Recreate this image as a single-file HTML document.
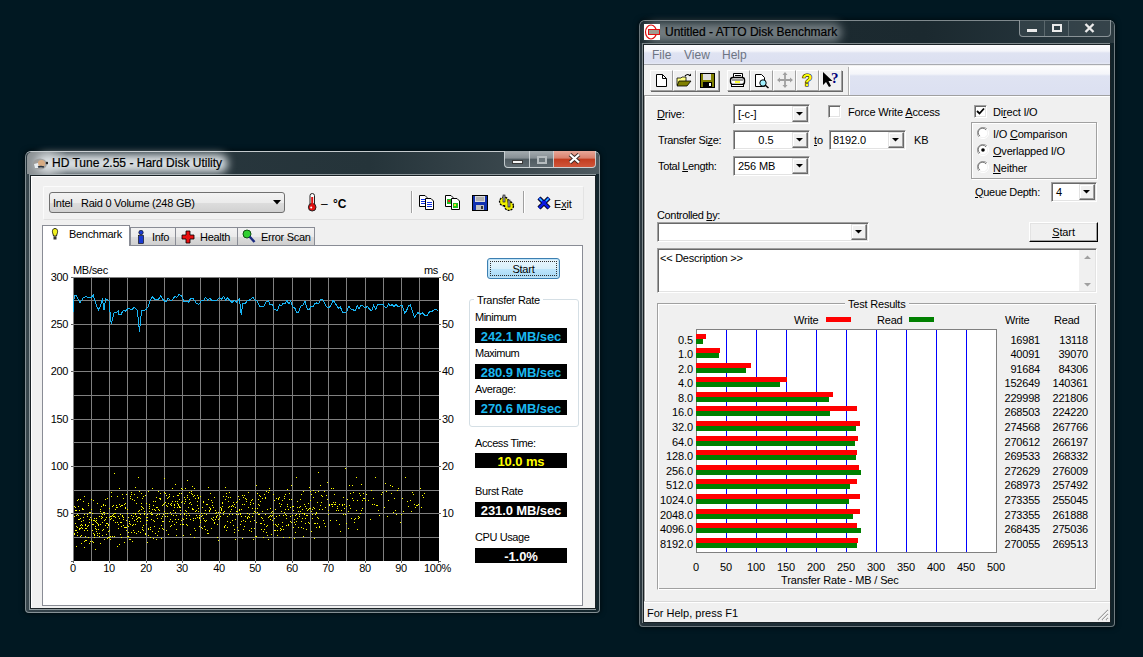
<!DOCTYPE html><html><head><meta charset="utf-8"><style>
*{box-sizing:border-box}
body{margin:0;width:1143px;height:657px;background:#011822;position:relative;overflow:hidden;font-family:"Liberation Sans",sans-serif;color:#000}
.t{position:absolute;white-space:pre}
.r{position:absolute}
svg{position:absolute}
</style></head><body>
<div class="r" style="left:25px;top:151px;width:575px;height:462px;box-shadow:0 0 5px 1px rgba(0,0,0,0.55);border-radius:6px 6px 4px 4px;background:linear-gradient(90deg,#3c494f 0px,#34424a 4px,#22323a 50%,#13252c 100%);border:1px solid rgba(150,160,165,0.85);border-top-color:#c4cacd"></div>
<div class="r" style="left:26px;top:152px;width:573px;height:22px;border-radius:5px 5px 0 0;background:linear-gradient(90deg,#2a383f 0%,#25343a 60%,#3a474d 85%,#4e5a60 100%)"></div>
<div class="r" style="left:29px;top:174px;width:567px;height:436px;border:1px solid #8e989c;border-right:none"></div>
<div class="r" style="left:27px;top:152px;width:40px;height:22px;background:linear-gradient(90deg,#8c9295 0%,#8c9295 55%,rgba(140,146,149,0) 100%);border-radius:5px 0 0 0"></div>
<div class="r" style="left:36px;top:154px;width:192px;height:19px;background:rgba(222,227,230,0.97);border-radius:9px;filter:blur(4px)"></div>
<div class="t" style="left:52.00px;top:156.84px;font-size:12px;line-height:12px;-webkit-text-stroke:0.2px #000;">HD Tune 2.55 - Hard Disk Utility</div>
<svg style="left:31px;top:155px" width="17" height="17" viewBox="0 0 17 17"><ellipse cx="9" cy="9" rx="7" ry="5.5" fill="#9a9896" opacity="0.8"/><circle cx="10.5" cy="8.5" r="3.6" fill="#d7ab82"/><path d="M3 9 L7 8 L8 13 L4 13Z" fill="#e8eef2"/><path d="M7 12 Q10 11 13 12" stroke="#2a3440" stroke-width="1.5" fill="none"/><circle cx="16" cy="8" r="1.3" fill="#222"/></svg>
<div class="r" style="left:504px;top:151px;width:26px;height:17px;border:1px solid rgba(205,212,215,0.9);border-top:none;border-radius:0 0 0 4px;background:linear-gradient(180deg,#a3abaf 0%,#868f94 45%,#4f5b61 50%,#5f6a70 100%)"></div>
<div class="r" style="left:529px;top:151px;width:25px;height:17px;border:1px solid rgba(205,212,215,0.9);border-top:none;background:linear-gradient(180deg,#a3abaf 0%,#868f94 45%,#4f5b61 50%,#5f6a70 100%)"></div>
<div class="r" style="left:553px;top:151px;width:43px;height:17px;border:1px solid rgba(205,212,215,0.9);border-top:none;border-radius:0 0 4px 0;background:linear-gradient(180deg,#e8a798 0%,#d9806c 45%,#c23c1f 50%,#d0553a 100%)"></div>
<div class="r" style="left:512px;top:160px;width:11px;height:4px;background:#f4f4f4;border:1px solid #3a3a3a"></div>
<div class="r" style="left:537px;top:156px;width:10px;height:8px;border:2px solid #b5bcbf;background:#6c777c"></div>
<svg style="left:568px;top:153px" width="13" height="11" viewBox="0 0 13 11"><path d="M2 1.5 L11 9.5 M11 1.5 L2 9.5" stroke="#3a2a26" stroke-width="4"/><path d="M2 1.5 L11 9.5 M11 1.5 L2 9.5" stroke="#fff" stroke-width="2.3"/></svg>
<div class="r" style="left:30px;top:175px;width:566px;height:434px;background:#f0f0f0;border:1px solid #1a2226;box-shadow:inset 1px 1px 0 #fff"></div>
<div class="r" style="left:43px;top:186px;width:541px;height:34px;border:1px solid #fbfbfb;border-bottom-color:#e0e0e0;border-right-color:#e3e3e3;background:#f1f1f1;border-radius:2px"></div>
<div class="r" style="left:49px;top:192px;width:236px;height:21px;border:1px solid #707070;border-radius:3px;background:linear-gradient(180deg,#f3f3f3 0%,#ebebeb 50%,#dddddd 51%,#d1d1d1 100%)"></div>
<div class="t" style="left:53.00px;top:197.69px;font-size:11px;line-height:11px;letter-spacing:-0.25px;">Intel   Raid 0 Volume (248 GB)</div>
<svg style="left:273px;top:200px" width="9" height="6"><path d="M0 0 H8 L4 4.5 Z" fill="#000"/></svg>
<svg style="left:306px;top:193px" width="12" height="19" viewBox="0 0 12 19"><rect x="4" y="0.5" width="4.5" height="13" rx="2.2" fill="#fff" stroke="#222"/><circle cx="6.2" cy="14.2" r="3.8" fill="#e01010" stroke="#222"/><rect x="5.2" y="4" width="2" height="10" fill="#e01010"/><circle cx="5.2" cy="14.5" r="1" fill="#fff"/></svg>
<div class="t" style="left:321.00px;top:197.84px;font-size:12px;line-height:12px;">–</div>
<div class="t" style="left:333.00px;top:197.84px;font-size:12px;line-height:12px;font-weight:700;">°C</div>
<div class="r" style="left:411px;top:191px;width:1px;height:22px;background:#a0a0a0;box-shadow:1px 0 0 #fff"></div>
<div class="r" style="left:523px;top:191px;width:1px;height:22px;background:#a0a0a0;box-shadow:1px 0 0 #fff"></div>
<svg style="left:418px;top:194px" width="17" height="17" viewBox="0 0 17 17"><path d="M1.5 1.5 H7 L9 3.5 V12.5 H1.5 Z" fill="#fff" stroke="#000"/><path d="M7.5 4.5 H13 L15.5 7 V15.5 H7.5 Z" fill="#fff" stroke="#000"/><path d="M3 5h4v1h-4zM3 7h4v1h-4zM3 9h4v1h-4zM9 8h5v1h-5zM9 10h5v1h-5zM9 12h5v1h-5z" fill="#1030e0"/></svg>
<svg style="left:444px;top:194px" width="17" height="17" viewBox="0 0 17 17"><path d="M1.5 1.5 H7 L9 3.5 V12.5 H1.5 Z" fill="#fff" stroke="#000"/><path d="M7.5 4.5 H13 L15.5 7 V15.5 H7.5 Z" fill="#fff" stroke="#000"/><rect x="3" y="5" width="4" height="5" fill="#20c020"/><rect x="4" y="6" width="2" height="2" fill="#f02020"/><rect x="9" y="9" width="5" height="5" fill="#20c020"/><rect x="10" y="10" width="2" height="2" fill="#f0e020"/></svg>
<svg style="left:472px;top:195px" width="16" height="16" viewBox="0 0 16 16"><rect x="0.5" y="0.5" width="15" height="15" fill="#1030b0" stroke="#000"/><rect x="3" y="1" width="10" height="6" fill="#d8d8d8"/><path d="M4 3h8M4 5h8" stroke="#888"/><rect x="4" y="10" width="8" height="5" fill="#c0c0c0"/><rect x="9" y="11" width="2" height="3" fill="#333"/></svg>
<svg style="left:498px;top:194px" width="19" height="18" viewBox="0 0 19 18"><g stroke="#000" stroke-width="1.6" fill="#f0f000"><circle cx="6" cy="7.5" r="4.3" stroke-dasharray="2 1"/><circle cx="11" cy="12" r="4.3" stroke-dasharray="2 1"/></g><circle cx="6" cy="7.5" r="3.6" fill="#f0f000"/><circle cx="11" cy="12" r="3.6" fill="#f0f000"/><rect x="5" y="1" width="2" height="7" fill="#a8a8b8" stroke="#000" stroke-width="0.6"/><rect x="10" y="6" width="2" height="7" fill="#a8a8b8" stroke="#000" stroke-width="0.6"/></svg>
<svg style="left:537px;top:196px" width="14" height="14" viewBox="0 0 14 14"><path d="M2 2 L12 12 M12 2 L2 12" stroke="#000" stroke-width="4.4"/><path d="M2 2 L12 12 M12 2 L2 12" stroke="#0a1ae0" stroke-width="2.6"/><path d="M2.5 2.5 L5 5 M11.5 2.5 L9 5" stroke="#30d0ff" stroke-width="1.2"/></svg>
<div class="t" style="left:554.00px;top:198.69px;font-size:11px;line-height:11px;letter-spacing:-0.2px;">Exit</div>
<div class="r" style="left:561px;top:209px;width:5px;height:1px;background:#000"></div>
<div class="r" style="left:42px;top:245px;width:541px;height:361px;background:#fff;border:1px solid #898c95"></div>
<div class="r" style="left:130px;top:227px;width:46px;height:19px;background:linear-gradient(180deg,#f2f2f2 0%,#ebebeb 50%,#dddddd 51%,#cfcfcf 100%);border:1px solid #898c95"></div>
<svg style="left:137px;top:230px" width="8" height="14"><circle cx="4" cy="2.5" r="2.2" fill="#1a3ad0" stroke="#000" stroke-width="0.6"/><rect x="1.5" y="5.5" width="5" height="8" fill="#1a3ad0" stroke="#000" stroke-width="0.6"/></svg>
<div class="t" style="left:152.00px;top:231.69px;font-size:11px;line-height:11px;letter-spacing:-0.3px;">Info</div>
<div class="r" style="left:175px;top:227px;width:63px;height:19px;background:linear-gradient(180deg,#f2f2f2 0%,#ebebeb 50%,#dddddd 51%,#cfcfcf 100%);border:1px solid #898c95"></div>
<svg style="left:181px;top:230px" width="14" height="14"><path d="M5 1h4v4h4v4h-4v4h-4v-4h-4v-4h4z" fill="#e81010" stroke="#000" stroke-width="0.8"/></svg>
<div class="t" style="left:200.00px;top:231.69px;font-size:11px;line-height:11px;letter-spacing:-0.3px;">Health</div>
<div class="r" style="left:237px;top:227px;width:78px;height:19px;background:linear-gradient(180deg,#f2f2f2 0%,#ebebeb 50%,#dddddd 51%,#cfcfcf 100%);border:1px solid #898c95"></div>
<svg style="left:242px;top:229px" width="14" height="15"><circle cx="5" cy="5" r="4" fill="#30d030" stroke="#105010"/><path d="M7.5 7.5 L12.5 13" stroke="#1a2a80" stroke-width="2.5"/></svg>
<div class="t" style="left:261.00px;top:231.69px;font-size:11px;line-height:11px;letter-spacing:-0.3px;">Error Scan</div>
<div class="r" style="left:42px;top:225px;width:88px;height:21px;background:#fff;border:1px solid #898c95;border-bottom:none"></div>
<svg style="left:51px;top:228px" width="8" height="13"><path d="M4 0.5 C1 0.5 1 4 2 6 L2.5 8 H5.5 L6 6 C7 4 7 0.5 4 0.5Z" fill="#f0f020" stroke="#000" stroke-width="0.8"/><rect x="2.5" y="8.5" width="3" height="3" fill="#333"/></svg>
<div class="t" style="left:69.00px;top:228.69px;font-size:11px;line-height:11px;letter-spacing:-0.3px;">Benchmark</div>
<div class="r" style="left:73px;top:277px;width:366px;height:284px;background:#000"></div>
<svg style="left:73px;top:277px" width="366" height="284"><path d="M0.5 0 V284 M18.5 0 V284 M36.5 0 V284 M54.5 0 V284 M73.5 0 V284 M91.5 0 V284 M109.5 0 V284 M127.5 0 V284 M146.5 0 V284 M164.5 0 V284 M182.5 0 V284 M200.5 0 V284 M219.5 0 V284 M237.5 0 V284 M255.5 0 V284 M273.5 0 V284 M292.5 0 V284 M310.5 0 V284 M328.5 0 V284 M346.5 0 V284 M0 0.5 H366 M0 23.5 H366 M0 47.5 H366 M0 71.5 H366 M0 94.5 H366 M0 118.5 H366 M0 142.5 H366 M0 165.5 H366 M0 189.5 H366 M0 213.5 H366 M0 236.5 H366 M0 260.5 H366" stroke="#808080" stroke-width="1" fill="none"/><path d="M1 256h1v1h-1zM1 239h1v1h-1zM1 257h1v1h-1zM1 229h1v1h-1zM2 246h1v1h-1zM2 253h1v1h-1zM2 233h1v1h-1zM2 230h1v1h-1zM3 253h1v1h-1zM3 249h1v1h-1zM3 238h1v1h-1zM3 269h1v1h-1zM3 233h1v1h-1zM4 250h1v1h-1zM4 255h1v1h-1zM4 223h1v1h-1zM4 258h1v1h-1zM4 237h1v1h-1zM5 229h1v1h-1zM5 242h1v1h-1zM5 222h1v1h-1zM5 238h1v1h-1zM6 242h1v1h-1zM6 233h1v1h-1zM6 252h1v1h-1zM6 251h1v1h-1zM7 259h1v1h-1zM7 251h1v1h-1zM7 248h1v1h-1zM7 222h1v1h-1zM7 241h1v1h-1zM8 258h1v1h-1zM8 247h1v1h-1zM8 266h1v1h-1zM8 244h1v1h-1zM8 250h1v1h-1zM9 232h1v1h-1zM9 251h1v1h-1zM9 248h1v1h-1zM9 231h1v1h-1zM10 240h1v1h-1zM10 243h1v1h-1zM10 224h1v1h-1zM10 232h1v1h-1zM11 237h1v1h-1zM11 270h1v1h-1zM11 253h1v1h-1zM11 219h1v1h-1zM11 264h1v1h-1zM12 251h1v1h-1zM12 248h1v1h-1zM12 263h1v1h-1zM12 259h1v1h-1zM12 247h1v1h-1zM13 251h1v1h-1zM13 251h1v1h-1zM13 251h1v1h-1zM13 263h1v1h-1zM14 249h1v1h-1zM14 253h1v1h-1zM14 239h1v1h-1zM14 237h1v1h-1zM15 260h1v1h-1zM15 226h1v1h-1zM15 228h1v1h-1zM15 248h1v1h-1zM16 242h1v1h-1zM16 266h1v1h-1zM16 245h1v1h-1zM16 235h1v1h-1zM17 264h1v1h-1zM17 235h1v1h-1zM17 235h1v1h-1zM17 240h1v1h-1zM18 232h1v1h-1zM18 243h1v1h-1zM18 242h1v1h-1zM18 222h1v1h-1zM19 247h1v1h-1zM19 236h1v1h-1zM19 253h1v1h-1zM19 264h1v1h-1zM20 223h1v1h-1zM20 243h1v1h-1zM20 247h1v1h-1zM20 256h1v1h-1zM20 265h1v1h-1zM21 241h1v1h-1zM21 260h1v1h-1zM21 258h1v1h-1zM21 257h1v1h-1zM21 243h1v1h-1zM22 244h1v1h-1zM22 272h1v1h-1zM22 249h1v1h-1zM22 251h1v1h-1zM23 254h1v1h-1zM23 241h1v1h-1zM23 245h1v1h-1zM23 243h1v1h-1zM23 252h1v1h-1zM24 258h1v1h-1zM24 226h1v1h-1zM24 246h1v1h-1zM24 256h1v1h-1zM25 252h1v1h-1zM25 247h1v1h-1zM25 248h1v1h-1zM25 247h1v1h-1zM26 259h1v1h-1zM26 256h1v1h-1zM26 239h1v1h-1zM26 256h1v1h-1zM27 234h1v1h-1zM27 266h1v1h-1zM27 232h1v1h-1zM27 247h1v1h-1zM28 229h1v1h-1zM28 236h1v1h-1zM28 241h1v1h-1zM28 239h1v1h-1zM29 240h1v1h-1zM29 237h1v1h-1zM29 253h1v1h-1zM29 258h1v1h-1zM29 245h1v1h-1zM30 235h1v1h-1zM30 252h1v1h-1zM30 228h1v1h-1zM30 227h1v1h-1zM31 243h1v1h-1zM31 237h1v1h-1zM31 262h1v1h-1zM31 235h1v1h-1zM32 242h1v1h-1zM32 222h1v1h-1zM32 248h1v1h-1zM32 228h1v1h-1zM33 246h1v1h-1zM33 257h1v1h-1zM33 240h1v1h-1zM33 246h1v1h-1zM34 246h1v1h-1zM34 250h1v1h-1zM34 236h1v1h-1zM34 221h1v1h-1zM34 261h1v1h-1zM35 248h1v1h-1zM35 247h1v1h-1zM35 260h1v1h-1zM35 254h1v1h-1zM36 260h1v1h-1zM36 240h1v1h-1zM36 231h1v1h-1zM36 253h1v1h-1zM37 239h1v1h-1zM37 242h1v1h-1zM37 259h1v1h-1zM37 262h1v1h-1zM38 239h1v1h-1zM38 215h1v1h-1zM38 219h1v1h-1zM38 241h1v1h-1zM39 259h1v1h-1zM39 229h1v1h-1zM39 238h1v1h-1zM40 228h1v1h-1zM40 239h1v1h-1zM40 243h1v1h-1zM40 237h1v1h-1zM41 239h1v1h-1zM41 196h1v1h-1zM41 236h1v1h-1zM41 259h1v1h-1zM42 240h1v1h-1zM42 236h1v1h-1zM42 232h1v1h-1zM42 245h1v1h-1zM43 230h1v1h-1zM43 228h1v1h-1zM43 228h1v1h-1zM44 230h1v1h-1zM44 245h1v1h-1zM44 269h1v1h-1zM44 219h1v1h-1zM45 239h1v1h-1zM45 247h1v1h-1zM45 251h1v1h-1zM46 267h1v1h-1zM46 211h1v1h-1zM46 241h1v1h-1zM46 227h1v1h-1zM47 245h1v1h-1zM47 229h1v1h-1zM47 257h1v1h-1zM47 237h1v1h-1zM48 228h1v1h-1zM48 245h1v1h-1zM48 249h1v1h-1zM48 260h1v1h-1zM49 238h1v1h-1zM49 228h1v1h-1zM49 239h1v1h-1zM49 217h1v1h-1zM50 240h1v1h-1zM50 221h1v1h-1zM50 242h1v1h-1zM50 248h1v1h-1zM51 250h1v1h-1zM51 227h1v1h-1zM51 265h1v1h-1zM52 230h1v1h-1zM52 226h1v1h-1zM52 250h1v1h-1zM52 231h1v1h-1zM53 217h1v1h-1zM53 243h1v1h-1zM53 253h1v1h-1zM53 250h1v1h-1zM54 259h1v1h-1zM54 232h1v1h-1zM54 236h1v1h-1zM54 248h1v1h-1zM55 249h1v1h-1zM55 240h1v1h-1zM55 259h1v1h-1zM55 255h1v1h-1zM56 262h1v1h-1zM56 244h1v1h-1zM56 246h1v1h-1zM57 262h1v1h-1zM57 219h1v1h-1zM57 247h1v1h-1zM57 221h1v1h-1zM58 215h1v1h-1zM58 255h1v1h-1zM58 217h1v1h-1zM58 238h1v1h-1zM59 222h1v1h-1zM59 241h1v1h-1zM59 248h1v1h-1zM59 264h1v1h-1zM60 253h1v1h-1zM60 239h1v1h-1zM60 236h1v1h-1zM60 247h1v1h-1zM61 223h1v1h-1zM61 255h1v1h-1zM61 217h1v1h-1zM61 243h1v1h-1zM62 247h1v1h-1zM62 237h1v1h-1zM62 210h1v1h-1zM62 236h1v1h-1zM63 226h1v1h-1zM63 256h1v1h-1zM63 242h1v1h-1zM63 239h1v1h-1zM64 241h1v1h-1zM64 244h1v1h-1zM64 220h1v1h-1zM65 240h1v1h-1zM65 234h1v1h-1zM65 254h1v1h-1zM65 200h1v1h-1zM66 240h1v1h-1zM66 214h1v1h-1zM66 233h1v1h-1zM66 236h1v1h-1zM67 241h1v1h-1zM67 237h1v1h-1zM67 255h1v1h-1zM67 244h1v1h-1zM68 232h1v1h-1zM68 226h1v1h-1zM68 229h1v1h-1zM68 216h1v1h-1zM69 250h1v1h-1zM69 252h1v1h-1zM69 230h1v1h-1zM69 221h1v1h-1zM70 253h1v1h-1zM70 219h1v1h-1zM70 231h1v1h-1zM70 248h1v1h-1zM71 237h1v1h-1zM71 236h1v1h-1zM71 234h1v1h-1zM72 256h1v1h-1zM72 257h1v1h-1zM72 218h1v1h-1zM73 247h1v1h-1zM73 226h1v1h-1zM73 240h1v1h-1zM73 243h1v1h-1zM74 265h1v1h-1zM74 237h1v1h-1zM74 243h1v1h-1zM74 240h1v1h-1zM75 214h1v1h-1zM75 258h1v1h-1zM75 252h1v1h-1zM75 251h1v1h-1zM76 227h1v1h-1zM76 231h1v1h-1zM76 234h1v1h-1zM76 229h1v1h-1zM77 252h1v1h-1zM77 236h1v1h-1zM77 250h1v1h-1zM77 260h1v1h-1zM78 235h1v1h-1zM78 237h1v1h-1zM78 242h1v1h-1zM79 254h1v1h-1zM79 237h1v1h-1zM79 211h1v1h-1zM79 232h1v1h-1zM80 228h1v1h-1zM80 224h1v1h-1zM80 261h1v1h-1zM80 243h1v1h-1zM81 244h1v1h-1zM81 232h1v1h-1zM81 249h1v1h-1zM82 224h1v1h-1zM82 256h1v1h-1zM82 233h1v1h-1zM82 233h1v1h-1zM83 262h1v1h-1zM83 220h1v1h-1zM83 238h1v1h-1zM83 230h1v1h-1zM84 241h1v1h-1zM84 237h1v1h-1zM84 230h1v1h-1zM84 258h1v1h-1zM85 254h1v1h-1zM85 214h1v1h-1zM85 232h1v1h-1zM85 232h1v1h-1zM86 251h1v1h-1zM86 221h1v1h-1zM86 233h1v1h-1zM86 237h1v1h-1zM87 222h1v1h-1zM87 221h1v1h-1zM87 216h1v1h-1zM87 221h1v1h-1zM88 261h1v1h-1zM88 241h1v1h-1zM88 248h1v1h-1zM88 241h1v1h-1zM89 244h1v1h-1zM89 251h1v1h-1zM89 239h1v1h-1zM89 228h1v1h-1zM90 252h1v1h-1zM90 227h1v1h-1zM90 237h1v1h-1zM90 244h1v1h-1zM91 215h1v1h-1zM91 201h1v1h-1zM91 226h1v1h-1zM91 234h1v1h-1zM92 236h1v1h-1zM92 216h1v1h-1zM92 239h1v1h-1zM92 225h1v1h-1zM93 218h1v1h-1zM93 253h1v1h-1zM93 228h1v1h-1zM94 221h1v1h-1zM94 239h1v1h-1zM94 229h1v1h-1zM94 236h1v1h-1zM95 220h1v1h-1zM95 257h1v1h-1zM95 220h1v1h-1zM95 226h1v1h-1zM96 244h1v1h-1zM96 219h1v1h-1zM96 217h1v1h-1zM97 249h1v1h-1zM97 242h1v1h-1zM97 235h1v1h-1zM97 227h1v1h-1zM98 226h1v1h-1zM98 248h1v1h-1zM98 237h1v1h-1zM98 228h1v1h-1zM99 211h1v1h-1zM99 244h1v1h-1zM99 224h1v1h-1zM99 244h1v1h-1zM100 233h1v1h-1zM100 219h1v1h-1zM100 238h1v1h-1zM100 219h1v1h-1zM101 228h1v1h-1zM101 227h1v1h-1zM101 230h1v1h-1zM101 247h1v1h-1zM102 235h1v1h-1zM102 242h1v1h-1zM102 224h1v1h-1zM102 207h1v1h-1zM103 258h1v1h-1zM103 252h1v1h-1zM103 245h1v1h-1zM103 238h1v1h-1zM104 230h1v1h-1zM104 226h1v1h-1zM104 218h1v1h-1zM104 224h1v1h-1zM105 218h1v1h-1zM105 227h1v1h-1zM105 242h1v1h-1zM105 228h1v1h-1zM106 222h1v1h-1zM106 229h1v1h-1zM106 216h1v1h-1zM106 230h1v1h-1zM107 237h1v1h-1zM107 233h1v1h-1zM107 247h1v1h-1zM107 230h1v1h-1zM108 243h1v1h-1zM108 211h1v1h-1zM108 225h1v1h-1zM108 216h1v1h-1zM109 212h1v1h-1zM109 224h1v1h-1zM109 241h1v1h-1zM109 247h1v1h-1zM110 242h1v1h-1zM110 247h1v1h-1zM110 258h1v1h-1zM111 237h1v1h-1zM111 236h1v1h-1zM111 220h1v1h-1zM111 226h1v1h-1zM112 211h1v1h-1zM112 222h1v1h-1zM112 224h1v1h-1zM112 233h1v1h-1zM113 241h1v1h-1zM113 234h1v1h-1zM113 238h1v1h-1zM113 247h1v1h-1zM114 248h1v1h-1zM114 220h1v1h-1zM114 218h1v1h-1zM114 203h1v1h-1zM115 230h1v1h-1zM115 236h1v1h-1zM115 236h1v1h-1zM116 215h1v1h-1zM116 238h1v1h-1zM116 222h1v1h-1zM116 226h1v1h-1zM117 225h1v1h-1zM117 257h1v1h-1zM117 242h1v1h-1zM118 214h1v1h-1zM118 227h1v1h-1zM118 216h1v1h-1zM119 232h1v1h-1zM119 231h1v1h-1zM119 209h1v1h-1zM119 217h1v1h-1zM120 241h1v1h-1zM120 232h1v1h-1zM120 219h1v1h-1zM120 243h1v1h-1zM121 260h1v1h-1zM121 251h1v1h-1zM121 211h1v1h-1zM121 218h1v1h-1zM122 221h1v1h-1zM122 234h1v1h-1zM122 253h1v1h-1zM122 241h1v1h-1zM123 238h1v1h-1zM123 238h1v1h-1zM123 233h1v1h-1zM124 228h1v1h-1zM124 240h1v1h-1zM124 224h1v1h-1zM124 218h1v1h-1zM125 234h1v1h-1zM125 231h1v1h-1zM125 220h1v1h-1zM125 221h1v1h-1zM126 249h1v1h-1zM126 241h1v1h-1zM126 238h1v1h-1zM126 240h1v1h-1zM127 219h1v1h-1zM127 243h1v1h-1zM127 245h1v1h-1zM128 236h1v1h-1zM128 250h1v1h-1zM128 239h1v1h-1zM129 251h1v1h-1zM129 238h1v1h-1zM129 230h1v1h-1zM130 225h1v1h-1zM130 241h1v1h-1zM130 224h1v1h-1zM131 236h1v1h-1zM131 243h1v1h-1zM131 249h1v1h-1zM132 252h1v1h-1zM132 244h1v1h-1zM132 233h1v1h-1zM133 243h1v1h-1zM133 237h1v1h-1zM133 227h1v1h-1zM134 227h1v1h-1zM134 253h1v1h-1zM134 256h1v1h-1zM135 210h1v1h-1zM135 256h1v1h-1zM135 222h1v1h-1zM136 234h1v1h-1zM136 230h1v1h-1zM136 233h1v1h-1zM137 216h1v1h-1zM137 232h1v1h-1zM137 231h1v1h-1zM138 223h1v1h-1zM138 251h1v1h-1zM138 241h1v1h-1zM139 225h1v1h-1zM139 228h1v1h-1zM139 242h1v1h-1zM140 243h1v1h-1zM140 230h1v1h-1zM140 240h1v1h-1zM141 246h1v1h-1zM141 245h1v1h-1zM141 220h1v1h-1zM142 242h1v1h-1zM142 233h1v1h-1zM142 236h1v1h-1zM143 240h1v1h-1zM143 239h1v1h-1zM143 235h1v1h-1zM144 247h1v1h-1zM144 260h1v1h-1zM144 238h1v1h-1zM145 235h1v1h-1zM145 263h1v1h-1zM145 242h1v1h-1zM146 237h1v1h-1zM146 237h1v1h-1zM146 241h1v1h-1zM147 239h1v1h-1zM147 230h1v1h-1zM147 235h1v1h-1zM148 232h1v1h-1zM148 231h1v1h-1zM148 233h1v1h-1zM149 225h1v1h-1zM149 229h1v1h-1zM149 226h1v1h-1zM150 237h1v1h-1zM150 219h1v1h-1zM150 235h1v1h-1zM151 234h1v1h-1zM151 250h1v1h-1zM151 249h1v1h-1zM152 210h1v1h-1zM152 248h1v1h-1zM152 222h1v1h-1zM153 253h1v1h-1zM153 219h1v1h-1zM153 216h1v1h-1zM154 239h1v1h-1zM154 250h1v1h-1zM154 244h1v1h-1zM155 224h1v1h-1zM155 230h1v1h-1zM155 220h1v1h-1zM156 237h1v1h-1zM156 215h1v1h-1zM156 229h1v1h-1zM157 220h1v1h-1zM157 234h1v1h-1zM157 245h1v1h-1zM158 232h1v1h-1zM158 229h1v1h-1zM158 229h1v1h-1zM159 237h1v1h-1zM159 243h1v1h-1zM159 228h1v1h-1zM160 225h1v1h-1zM160 248h1v1h-1zM160 229h1v1h-1zM161 252h1v1h-1zM161 255h1v1h-1zM161 227h1v1h-1zM162 262h1v1h-1zM162 242h1v1h-1zM162 230h1v1h-1zM163 237h1v1h-1zM163 234h1v1h-1zM163 225h1v1h-1zM164 250h1v1h-1zM164 224h1v1h-1zM164 234h1v1h-1zM165 219h1v1h-1zM165 253h1v1h-1zM165 237h1v1h-1zM166 232h1v1h-1zM166 222h1v1h-1zM166 233h1v1h-1zM167 247h1v1h-1zM167 237h1v1h-1zM167 236h1v1h-1zM168 244h1v1h-1zM168 232h1v1h-1zM168 239h1v1h-1zM169 261h1v1h-1zM169 227h1v1h-1zM169 218h1v1h-1zM170 243h1v1h-1zM170 220h1v1h-1zM170 252h1v1h-1zM171 218h1v1h-1zM171 227h1v1h-1zM171 249h1v1h-1zM172 244h1v1h-1zM172 239h1v1h-1zM172 221h1v1h-1zM173 222h1v1h-1zM173 224h1v1h-1zM173 222h1v1h-1zM174 236h1v1h-1zM174 240h1v1h-1zM174 241h1v1h-1zM175 215h1v1h-1zM175 239h1v1h-1zM175 230h1v1h-1zM176 237h1v1h-1zM176 240h1v1h-1zM176 253h1v1h-1zM177 225h1v1h-1zM177 244h1v1h-1zM177 227h1v1h-1zM178 251h1v1h-1zM178 254h1v1h-1zM178 223h1v1h-1zM179 231h1v1h-1zM179 239h1v1h-1zM179 222h1v1h-1zM180 226h1v1h-1zM180 236h1v1h-1zM180 262h1v1h-1zM181 234h1v1h-1zM181 243h1v1h-1zM181 251h1v1h-1zM182 235h1v1h-1zM182 259h1v1h-1zM182 231h1v1h-1zM183 245h1v1h-1zM183 208h1v1h-1zM183 259h1v1h-1zM184 216h1v1h-1zM184 231h1v1h-1zM184 235h1v1h-1zM185 237h1v1h-1zM185 227h1v1h-1zM185 222h1v1h-1zM186 228h1v1h-1zM186 218h1v1h-1zM186 237h1v1h-1zM187 224h1v1h-1zM187 219h1v1h-1zM187 246h1v1h-1zM188 246h1v1h-1zM188 252h1v1h-1zM188 240h1v1h-1zM189 241h1v1h-1zM189 221h1v1h-1zM189 234h1v1h-1zM190 260h1v1h-1zM190 243h1v1h-1zM190 254h1v1h-1zM191 252h1v1h-1zM191 247h1v1h-1zM191 217h1v1h-1zM192 221h1v1h-1zM192 220h1v1h-1zM192 237h1v1h-1zM193 249h1v1h-1zM193 214h1v1h-1zM193 255h1v1h-1zM194 232h1v1h-1zM194 258h1v1h-1zM194 248h1v1h-1zM195 262h1v1h-1zM195 240h1v1h-1zM195 215h1v1h-1zM196 213h1v1h-1zM196 239h1v1h-1zM196 211h1v1h-1zM197 231h1v1h-1zM197 238h1v1h-1zM197 242h1v1h-1zM198 235h1v1h-1zM198 239h1v1h-1zM198 257h1v1h-1zM199 243h1v1h-1zM199 234h1v1h-1zM199 238h1v1h-1zM200 236h1v1h-1zM200 247h1v1h-1zM200 217h1v1h-1zM201 241h1v1h-1zM201 223h1v1h-1zM201 253h1v1h-1zM202 232h1v1h-1zM202 253h1v1h-1zM202 247h1v1h-1zM203 248h1v1h-1zM203 239h1v1h-1zM203 221h1v1h-1zM204 258h1v1h-1zM204 249h1v1h-1zM204 253h1v1h-1zM205 222h1v1h-1zM205 221h1v1h-1zM205 247h1v1h-1zM206 226h1v1h-1zM206 238h1v1h-1zM206 220h1v1h-1zM207 253h1v1h-1zM207 229h1v1h-1zM207 251h1v1h-1zM208 252h1v1h-1zM208 227h1v1h-1zM208 234h1v1h-1zM209 249h1v1h-1zM209 223h1v1h-1zM209 245h1v1h-1zM210 260h1v1h-1zM210 252h1v1h-1zM210 238h1v1h-1zM211 221h1v1h-1zM211 235h1v1h-1zM211 219h1v1h-1zM212 217h1v1h-1zM212 232h1v1h-1zM212 237h1v1h-1zM213 248h1v1h-1zM213 238h1v1h-1zM213 241h1v1h-1zM214 229h1v1h-1zM214 227h1v1h-1zM214 212h1v1h-1zM215 248h1v1h-1zM215 247h1v1h-1zM215 232h1v1h-1zM216 260h1v1h-1zM216 216h1v1h-1zM216 222h1v1h-1zM217 239h1v1h-1zM217 244h1v1h-1zM217 230h1v1h-1zM218 208h1v1h-1zM218 222h1v1h-1zM218 245h1v1h-1zM219 238h1v1h-1zM219 238h1v1h-1zM219 229h1v1h-1zM220 250h1v1h-1zM220 229h1v1h-1zM220 233h1v1h-1zM221 242h1v1h-1zM221 245h1v1h-1zM221 261h1v1h-1zM222 247h1v1h-1zM222 255h1v1h-1zM222 238h1v1h-1zM223 244h1v1h-1zM223 237h1v1h-1zM223 200h1v1h-1zM224 230h1v1h-1zM224 241h1v1h-1zM224 224h1v1h-1zM225 234h1v1h-1zM225 250h1v1h-1zM225 234h1v1h-1zM226 239h1v1h-1zM226 237h1v1h-1zM226 230h1v1h-1zM227 229h1v1h-1zM227 234h1v1h-1zM227 222h1v1h-1zM228 250h1v1h-1zM228 244h1v1h-1zM228 217h1v1h-1zM229 241h1v1h-1zM229 232h1v1h-1zM229 236h1v1h-1zM230 259h1v1h-1zM230 214h1v1h-1zM230 251h1v1h-1zM231 227h1v1h-1zM231 237h1v1h-1zM231 236h1v1h-1zM232 229h1v1h-1zM232 246h1v1h-1zM232 241h1v1h-1zM233 238h1v1h-1zM233 231h1v1h-1zM233 252h1v1h-1zM234 233h1v1h-1zM234 238h1v1h-1zM234 233h1v1h-1zM235 232h1v1h-1zM235 226h1v1h-1zM235 245h1v1h-1zM236 210h1v1h-1zM236 231h1v1h-1zM236 246h1v1h-1zM237 231h1v1h-1zM237 223h1v1h-1zM237 214h1v1h-1zM238 217h1v1h-1zM238 234h1v1h-1zM238 254h1v1h-1zM239 241h1v1h-1zM239 232h1v1h-1zM239 237h1v1h-1zM240 213h1v1h-1zM240 230h1v1h-1zM240 220h1v1h-1zM241 246h1v1h-1zM241 231h1v1h-1zM241 261h1v1h-1zM242 215h1v1h-1zM242 237h1v1h-1zM242 246h1v1h-1zM243 235h1v1h-1zM243 236h1v1h-1zM243 250h1v1h-1zM244 240h1v1h-1zM244 246h1v1h-1zM244 225h1v1h-1zM245 241h1v1h-1zM245 195h1v1h-1zM245 214h1v1h-1zM246 250h1v1h-1zM246 232h1v1h-1zM246 249h1v1h-1zM247 228h1v1h-1zM247 208h1v1h-1zM248 218h1v1h-1zM248 225h1v1h-1zM249 219h1v1h-1zM249 232h1v1h-1zM250 243h1v1h-1zM251 246h1v1h-1zM251 214h1v1h-1zM252 249h1v1h-1zM252 230h1v1h-1zM253 218h1v1h-1zM254 205h1v1h-1zM254 222h1v1h-1zM255 233h1v1h-1zM255 237h1v1h-1zM256 228h1v1h-1zM256 227h1v1h-1zM257 243h1v1h-1zM257 243h1v1h-1zM258 211h1v1h-1zM258 227h1v1h-1zM259 227h1v1h-1zM259 229h1v1h-1zM260 211h1v1h-1zM260 225h1v1h-1zM261 217h1v1h-1zM261 227h1v1h-1zM262 225h1v1h-1zM262 227h1v1h-1zM263 243h1v1h-1zM263 233h1v1h-1zM264 229h1v1h-1zM264 231h1v1h-1zM265 233h1v1h-1zM266 227h1v1h-1zM266 247h1v1h-1zM267 254h1v1h-1zM267 254h1v1h-1zM268 233h1v1h-1zM269 228h1v1h-1zM269 227h1v1h-1zM270 220h1v1h-1zM270 237h1v1h-1zM271 231h1v1h-1zM271 227h1v1h-1zM272 191h1v1h-1zM272 237h1v1h-1zM273 229h1v1h-1zM273 246h1v1h-1zM274 222h1v1h-1zM275 234h1v1h-1zM275 251h1v1h-1zM276 208h1v1h-1zM276 228h1v1h-1zM277 231h1v1h-1zM277 216h1v1h-1zM278 241h1v1h-1zM279 221h1v1h-1zM279 208h1v1h-1zM280 223h1v1h-1zM280 215h1v1h-1zM281 242h1v1h-1zM281 245h1v1h-1zM282 241h1v1h-1zM283 200h1v1h-1zM283 233h1v1h-1zM284 223h1v1h-1zM284 252h1v1h-1zM285 239h1v1h-1zM285 241h1v1h-1zM286 240h1v1h-1zM286 216h1v1h-1zM287 218h1v1h-1zM287 236h1v1h-1zM288 233h1v1h-1zM288 207h1v1h-1zM289 231h1v1h-1zM289 223h1v1h-1zM290 221h1v1h-1zM290 216h1v1h-1zM291 221h1v1h-1zM292 223h1v1h-1zM293 217h1v1h-1zM295 223h1v1h-1zM297 242h1v1h-1zM298 213h1v1h-1zM299 227h1v1h-1zM300 221h1v1h-1zM301 227h1v1h-1zM302 200h1v1h-1zM303 228h1v1h-1zM304 228h1v1h-1zM305 233h1v1h-1zM306 238h1v1h-1zM308 217h1v1h-1zM309 215h1v1h-1zM311 230h1v1h-1zM312 206h1v1h-1zM313 214h1v1h-1zM314 239h1v1h-1zM315 223h1v1h-1zM317 208h1v1h-1zM318 216h1v1h-1zM319 209h1v1h-1zM320 235h1v1h-1zM321 221h1v1h-1zM322 233h1v1h-1zM323 237h1v1h-1zM324 213h1v1h-1zM325 211h1v1h-1zM327 245h1v1h-1zM328 237h1v1h-1zM329 221h1v1h-1zM330 234h1v1h-1zM332 200h1v1h-1zM334 224h1v1h-1zM335 229h1v1h-1zM337 223h1v1h-1zM338 234h1v1h-1zM339 215h1v1h-1zM340 217h1v1h-1zM341 227h1v1h-1zM342 230h1v1h-1zM343 228h1v1h-1zM344 228h1v1h-1zM345 227h1v1h-1zM347 211h1v1h-1zM348 230h1v1h-1zM349 218h1v1h-1zM350 220h1v1h-1zM351 216h1v1h-1z" fill="#ffff00"/><path d="M0.3 34.6 L1.2 18.3 L3.6 18.8 L7.0 26.0 L10.3 20.5 L13.6 19.6 L15.3 20.5 L17.8 20.6 L20.3 18.3 L22.8 26.5 L25.3 33.0 L27.3 29.2 L29.4 21.6 L31.0 33.0 L32.7 21.6 L36.0 23.8 L38.2 47.0 L41.0 36.0 L43.1 35.6 L45.2 33.8 L46.0 38.0 L48.1 37.3 L50.2 33.4 L52.4 34.2 L54.6 31.8 L56.8 32.0 L58.9 32.8 L61.0 30.4 L64.3 33.0 L66.5 54.5 L68.5 33.8 L71.0 33.5 L73.5 32.0 L75.4 29.3 L77.4 23.1 L79.3 19.6 L81.4 22.0 L83.4 23.0 L85.5 22.3 L87.6 18.8 L91.0 23.8 L93.0 24.8 L95.0 21.3 L97.6 23.8 L99.6 22.5 L101.7 19.6 L103.9 20.3 L106.2 17.2 L108.4 18.8 L110.9 24.2 L113.4 24.6 L115.6 25.2 L117.8 21.1 L120.0 21.3 L123.3 26.3 L125.8 27.6 L128.3 23.8 L130.4 23.8 L132.4 20.2 L134.5 23.0 L136.6 21.3 L139.1 23.4 L141.6 23.8 L144.1 22.9 L146.6 20.5 L148.6 22.1 L150.6 19.3 L152.6 22.9 L154.6 20.8 L156.6 23.0 L158.8 25.6 L161.0 23.3 L163.2 25.4 L166.5 21.6 L168.2 38.0 L169.9 26.3 L172.1 26.9 L174.3 23.5 L176.5 23.0 L180.0 20.5 L182.2 23.4 L184.3 24.1 L186.5 29.3 L188.6 29.6 L190.8 29.1 L193.1 24.6 L195.3 23.8 L197.2 27.8 L199.1 26.9 L200.9 31.8 L202.8 33.0 L204.6 33.4 L206.5 27.5 L208.4 28.8 L210.2 26.0 L212.1 27.2 L213.9 23.4 L215.8 26.8 L217.7 24.0 L219.6 29.8 L221.6 30.5 L223.5 35.4 L225.6 35.1 L227.7 29.0 L229.8 28.2 L231.9 24.0 L234.3 32.0 L236.1 32.9 L238.0 28.8 L239.8 29.9 L241.7 26.6 L243.5 26.0 L245.7 26.9 L247.9 21.9 L250.1 23.0 L252.6 28.7 L255.1 31.0 L257.6 29.3 L260.1 23.0 L263.4 28.0 L265.5 31.2 L267.5 30.0 L269.6 35.7 L271.7 36.0 L273.8 34.2 L275.9 29.0 L278.0 32.3 L280.1 32.6 L282.1 34.1 L284.1 28.7 L286.0 31.9 L288.0 27.8 L290.0 29.0 L292.2 30.8 L294.5 29.4 L296.7 32.6 L298.7 33.5 L300.7 28.2 L302.7 32.1 L304.7 27.8 L306.7 28.0 L310.0 27.6 L311.6 30.0 L313.5 30.7 L315.4 26.9 L317.2 28.7 L319.1 27.6 L321.0 29.4 L322.9 27.4 L324.7 29.4 L326.6 29.0 L329.1 28.8 L331.6 36.0 L333.5 34.0 L335.5 28.6 L337.4 28.0 L339.5 35.0 L341.6 40.4 L344.9 35.4 L347.1 37.3 L349.3 35.8 L351.5 38.0 L354.0 38.6 L356.5 34.6 L359.0 34.3 L361.5 32.6 L364.8 33.2" stroke="#18b4f4" stroke-width="1" fill="none" shape-rendering="crispEdges"/></svg>
<div class="r" style="left:71px;top:277px;width:2px;height:1px;background:#606060"></div>
<div class="r" style="left:439px;top:277px;width:2px;height:1px;background:#606060"></div>
<div class="r" style="left:71px;top:324px;width:2px;height:1px;background:#606060"></div>
<div class="r" style="left:439px;top:324px;width:2px;height:1px;background:#606060"></div>
<div class="r" style="left:71px;top:371px;width:2px;height:1px;background:#606060"></div>
<div class="r" style="left:439px;top:371px;width:2px;height:1px;background:#606060"></div>
<div class="r" style="left:71px;top:419px;width:2px;height:1px;background:#606060"></div>
<div class="r" style="left:439px;top:419px;width:2px;height:1px;background:#606060"></div>
<div class="r" style="left:71px;top:466px;width:2px;height:1px;background:#606060"></div>
<div class="r" style="left:439px;top:466px;width:2px;height:1px;background:#606060"></div>
<div class="r" style="left:71px;top:513px;width:2px;height:1px;background:#606060"></div>
<div class="r" style="left:439px;top:513px;width:2px;height:1px;background:#606060"></div>
<div class="r" style="left:71px;top:561px;width:2px;height:1px;background:#606060"></div>
<div class="r" style="left:439px;top:561px;width:2px;height:1px;background:#606060"></div>
<div class="r" style="left:73px;top:561px;width:1px;height:2px;background:#606060"></div>
<div class="r" style="left:109px;top:561px;width:1px;height:2px;background:#606060"></div>
<div class="r" style="left:146px;top:561px;width:1px;height:2px;background:#606060"></div>
<div class="r" style="left:182px;top:561px;width:1px;height:2px;background:#606060"></div>
<div class="r" style="left:219px;top:561px;width:1px;height:2px;background:#606060"></div>
<div class="r" style="left:255px;top:561px;width:1px;height:2px;background:#606060"></div>
<div class="r" style="left:292px;top:561px;width:1px;height:2px;background:#606060"></div>
<div class="r" style="left:328px;top:561px;width:1px;height:2px;background:#606060"></div>
<div class="r" style="left:365px;top:561px;width:1px;height:2px;background:#606060"></div>
<div class="r" style="left:401px;top:561px;width:1px;height:2px;background:#606060"></div>
<div class="r" style="left:438px;top:561px;width:1px;height:2px;background:#606060"></div>
<div class="t" style="left:50.70px;top:271.69px;font-size:11px;line-height:11px;letter-spacing:-0.3px;">300</div>
<div class="t" style="left:50.70px;top:318.69px;font-size:11px;line-height:11px;letter-spacing:-0.3px;">250</div>
<div class="t" style="left:50.70px;top:365.69px;font-size:11px;line-height:11px;letter-spacing:-0.3px;">200</div>
<div class="t" style="left:50.70px;top:413.69px;font-size:11px;line-height:11px;letter-spacing:-0.3px;">150</div>
<div class="t" style="left:50.70px;top:460.69px;font-size:11px;line-height:11px;letter-spacing:-0.3px;">100</div>
<div class="t" style="left:56.80px;top:507.69px;font-size:11px;line-height:11px;letter-spacing:-0.3px;">50</div>
<div class="t" style="left:442.00px;top:271.69px;font-size:11px;line-height:11px;letter-spacing:-0.3px;">60</div>
<div class="t" style="left:442.00px;top:318.69px;font-size:11px;line-height:11px;letter-spacing:-0.3px;">50</div>
<div class="t" style="left:442.00px;top:365.69px;font-size:11px;line-height:11px;letter-spacing:-0.3px;">40</div>
<div class="t" style="left:442.00px;top:413.69px;font-size:11px;line-height:11px;letter-spacing:-0.3px;">30</div>
<div class="t" style="left:442.00px;top:460.69px;font-size:11px;line-height:11px;letter-spacing:-0.3px;">20</div>
<div class="t" style="left:442.00px;top:507.69px;font-size:11px;line-height:11px;letter-spacing:-0.3px;">10</div>
<div class="t" style="left:73.00px;top:264.69px;font-size:11px;line-height:11px;letter-spacing:-0.3px;">MB/sec</div>
<div class="t" style="left:424.00px;top:264.69px;font-size:11px;line-height:11px;letter-spacing:-0.3px;">ms</div>
<div class="t" style="left:53.00px;top:562.69px;font-size:11px;line-height:11px;letter-spacing:-0.3px;text-align:center;width:40px;">0</div>
<div class="t" style="left:89.00px;top:562.69px;font-size:11px;line-height:11px;letter-spacing:-0.3px;text-align:center;width:40px;">10</div>
<div class="t" style="left:126.00px;top:562.69px;font-size:11px;line-height:11px;letter-spacing:-0.3px;text-align:center;width:40px;">20</div>
<div class="t" style="left:162.00px;top:562.69px;font-size:11px;line-height:11px;letter-spacing:-0.3px;text-align:center;width:40px;">30</div>
<div class="t" style="left:199.00px;top:562.69px;font-size:11px;line-height:11px;letter-spacing:-0.3px;text-align:center;width:40px;">40</div>
<div class="t" style="left:235.00px;top:562.69px;font-size:11px;line-height:11px;letter-spacing:-0.3px;text-align:center;width:40px;">50</div>
<div class="t" style="left:272.00px;top:562.69px;font-size:11px;line-height:11px;letter-spacing:-0.3px;text-align:center;width:40px;">60</div>
<div class="t" style="left:308.00px;top:562.69px;font-size:11px;line-height:11px;letter-spacing:-0.3px;text-align:center;width:40px;">70</div>
<div class="t" style="left:345.00px;top:562.69px;font-size:11px;line-height:11px;letter-spacing:-0.3px;text-align:center;width:40px;">80</div>
<div class="t" style="left:381.00px;top:562.69px;font-size:11px;line-height:11px;letter-spacing:-0.3px;text-align:center;width:40px;">90</div>
<div class="t" style="left:424.00px;top:562.69px;font-size:11px;line-height:11px;letter-spacing:-0.3px;">100%</div>
<div class="r" style="left:487px;top:258px;width:73px;height:21px;border:1px solid #3c7fb1;border-radius:3px;background:linear-gradient(180deg,#eaf6fd 0%,#d9f0fc 50%,#bee6fd 51%,#a7d9f5 100%);box-shadow:inset 0 0 0 1px #bfe3f8"></div>
<div class="r" style="left:490px;top:261px;width:67px;height:15px;border:1px dotted #303030"></div>
<div class="t" style="left:487.00px;top:263.69px;font-size:11px;line-height:11px;letter-spacing:-0.2px;text-align:center;width:73px;">Start</div>
<div class="r" style="left:469px;top:299px;width:110px;height:128px;border:1px solid #d5dfe5;border-radius:3px"></div>
<div class="r" style="left:474px;top:295px;width:69px;height:9px;background:#fff"></div>
<div class="t" style="left:477.00px;top:294.69px;font-size:11px;line-height:11px;letter-spacing:-0.3px;">Transfer Rate</div>
<div class="t" style="left:475.00px;top:311.69px;font-size:11px;line-height:11px;letter-spacing:-0.5px;">Minimum</div>
<div class="r" style="left:475px;top:328px;width:92px;height:15px;background:#000"></div>
<div class="t" style="left:475.00px;top:329.50px;font-size:13px;line-height:13px;color:#1ab8f0;font-weight:700;letter-spacing:-0.1px;text-align:center;width:92px;">242.1 MB/sec</div>
<div class="t" style="left:475.00px;top:347.69px;font-size:11px;line-height:11px;letter-spacing:-0.5px;">Maximum</div>
<div class="r" style="left:475px;top:364px;width:92px;height:15px;background:#000"></div>
<div class="t" style="left:475.00px;top:365.50px;font-size:13px;line-height:13px;color:#1ab8f0;font-weight:700;letter-spacing:-0.1px;text-align:center;width:92px;">280.9 MB/sec</div>
<div class="t" style="left:475.00px;top:383.69px;font-size:11px;line-height:11px;letter-spacing:-0.4px;">Average:</div>
<div class="r" style="left:475px;top:400px;width:92px;height:15px;background:#000"></div>
<div class="t" style="left:475.00px;top:401.50px;font-size:13px;line-height:13px;color:#1ab8f0;font-weight:700;letter-spacing:-0.1px;text-align:center;width:92px;">270.6 MB/sec</div>
<div class="t" style="left:475.00px;top:437.69px;font-size:11px;line-height:11px;letter-spacing:-0.4px;">Access Time:</div>
<div class="r" style="left:475px;top:453px;width:92px;height:15px;background:#000"></div>
<div class="t" style="left:475.00px;top:454.50px;font-size:13px;line-height:13px;color:#ffff00;font-weight:700;letter-spacing:-0.1px;text-align:center;width:92px;">10.0 ms</div>
<div class="t" style="left:475.00px;top:485.69px;font-size:11px;line-height:11px;letter-spacing:-0.4px;">Burst Rate</div>
<div class="r" style="left:475px;top:502px;width:92px;height:15px;background:#000"></div>
<div class="t" style="left:475.00px;top:503.50px;font-size:13px;line-height:13px;color:#fff;font-weight:700;letter-spacing:-0.1px;text-align:center;width:92px;">231.0 MB/sec</div>
<div class="t" style="left:475.00px;top:531.69px;font-size:11px;line-height:11px;letter-spacing:-0.4px;">CPU Usage</div>
<div class="r" style="left:475px;top:548px;width:92px;height:15px;background:#000"></div>
<div class="t" style="left:475.00px;top:549.50px;font-size:13px;line-height:13px;color:#fff;font-weight:700;letter-spacing:-0.1px;text-align:center;width:92px;">-1.0%</div>
<div class="r" style="left:639px;top:20px;width:476px;height:607px;box-shadow:0 0 5px 1px rgba(0,0,0,0.55);border-radius:6px 6px 4px 4px;background:linear-gradient(90deg,#2c3940 0px,#24323a 4px,#1a2a32 50%,#12232a 100%);border:1px solid rgba(130,140,145,0.8);border-top-color:#7f898d"></div>
<div class="r" style="left:640px;top:21px;width:474px;height:22px;border-radius:5px 5px 0 0;background:linear-gradient(90deg,#1e2c32 0%,#1b292f 60%,#24333a 85%,#2c3a40 100%)"></div>
<div class="r" style="left:642px;top:43px;width:468px;height:580px;border:1px solid #7e888c;border-right:none"></div>
<div class="r" style="left:646px;top:23px;width:196px;height:19px;background:rgba(118,128,132,0.95);border-radius:9px;filter:blur(4px)"></div>
<div class="t" style="left:665.00px;top:25.84px;font-size:12px;line-height:12px;-webkit-text-stroke:0.2px #000;">Untitled - ATTO Disk Benchmark</div>
<svg style="left:644px;top:24px" width="16" height="16" viewBox="0 0 16 16"><rect width="16" height="16" fill="#fff"/><ellipse cx="7" cy="8" rx="5.5" ry="7" fill="none" stroke="#e01010" stroke-width="1.2"/><rect x="4" y="5" width="12" height="6" fill="#e01010"/><rect x="5" y="6" width="10" height="4" fill="#a09a90"/></svg>
<div class="r" style="left:1019px;top:20px;width:26px;height:17px;border:1px solid #8a9397;border-top:none;border-radius:0 0 0 4px;background:rgba(60,75,82,0.6)"></div>
<div class="r" style="left:1044px;top:20px;width:25px;height:17px;border:1px solid #8a9397;border-top:none;border-left:none;background:rgba(60,75,82,0.6)"></div>
<div class="r" style="left:1068px;top:20px;width:43px;height:17px;border:1px solid #8a9397;border-top:none;border-left:none;border-radius:0 0 4px 0;background:rgba(60,75,82,0.6)"></div>
<div class="r" style="left:1027px;top:29px;width:10px;height:3px;background:#eaeaea"></div>
<div class="r" style="left:1052px;top:24px;width:10px;height:8px;border:2px solid #eaeaea"></div>
<svg style="left:1084px;top:23px" width="11" height="10" viewBox="0 0 11 10"><path d="M1.5 1 L9.5 9 M9.5 1 L1.5 9" stroke="#eaeaea" stroke-width="2.4"/></svg>
<div class="r" style="left:643px;top:44px;width:468px;height:579px;background:#f0f0f0;border:1px solid #1a2226"></div>
<div class="r" style="left:644px;top:45px;width:466px;height:19px;background:linear-gradient(180deg,#fcfcfe 0px,#f4f5fa 6px,#dfe3f2 8px,#dce0f1 17px,#e6e9f5 19px)"></div>
<div class="r" style="left:644px;top:64px;width:466px;height:1px;background:#a8aab0"></div>
<div class="t" style="left:652.00px;top:48.84px;font-size:12px;line-height:12px;color:#6d7482;">File</div>
<div class="t" style="left:684.00px;top:48.84px;font-size:12px;line-height:12px;color:#6d7482;">View</div>
<div class="t" style="left:722.00px;top:48.84px;font-size:12px;line-height:12px;color:#6d7482;">Help</div>
<div class="r" style="left:644px;top:65px;width:466px;height:31px;background:#f0f0f0"></div>
<div class="r" style="left:849px;top:66px;width:261px;height:29px;background:linear-gradient(180deg,#fdfdfe 0px,#f4f5fa 8px,#dfe3f2 10px,#dce0f1 100%);border-left:1px solid #fff"></div>
<div class="r" style="left:848px;top:67px;width:1px;height:28px;background:#b0b0b0"></div>
<div class="r" style="left:650px;top:70px;width:23px;height:21px;background:#f0f0f0;border-top:1px solid #fff;border-left:1px solid #fff;border-right:1px solid #a0a0a0;border-bottom:1px solid #a0a0a0;box-shadow:1px 1px 0 #696969"></div>
<div class="r" style="left:673px;top:70px;width:23px;height:21px;background:#f0f0f0;border-top:1px solid #fff;border-left:1px solid #fff;border-right:1px solid #a0a0a0;border-bottom:1px solid #a0a0a0;box-shadow:1px 1px 0 #696969"></div>
<div class="r" style="left:696px;top:70px;width:23px;height:21px;background:#f0f0f0;border-top:1px solid #fff;border-left:1px solid #fff;border-right:1px solid #a0a0a0;border-bottom:1px solid #a0a0a0;box-shadow:1px 1px 0 #696969"></div>
<div class="r" style="left:727px;top:70px;width:23px;height:21px;background:#f0f0f0;border-top:1px solid #fff;border-left:1px solid #fff;border-right:1px solid #a0a0a0;border-bottom:1px solid #a0a0a0;box-shadow:1px 1px 0 #696969"></div>
<div class="r" style="left:750px;top:70px;width:23px;height:21px;background:#f0f0f0;border-top:1px solid #fff;border-left:1px solid #fff;border-right:1px solid #a0a0a0;border-bottom:1px solid #a0a0a0;box-shadow:1px 1px 0 #696969"></div>
<div class="r" style="left:773px;top:70px;width:23px;height:21px;background:#f0f0f0;border-top:1px solid #fff;border-left:1px solid #fff;border-right:1px solid #a0a0a0;border-bottom:1px solid #a0a0a0;box-shadow:1px 1px 0 #696969"></div>
<div class="r" style="left:796px;top:70px;width:23px;height:21px;background:#f0f0f0;border-top:1px solid #fff;border-left:1px solid #fff;border-right:1px solid #a0a0a0;border-bottom:1px solid #a0a0a0;box-shadow:1px 1px 0 #696969"></div>
<div class="r" style="left:819px;top:70px;width:23px;height:21px;background:#f0f0f0;border-top:1px solid #fff;border-left:1px solid #fff;border-right:1px solid #a0a0a0;border-bottom:1px solid #a0a0a0;box-shadow:1px 1px 0 #696969"></div>
<svg style="left:655px;top:73px" width="13" height="15"><path d="M1.5 1.5 H7.5 L11.5 5.5 V13.5 H1.5 Z" fill="#fff" stroke="#000"/><path d="M7.5 1.5 V5.5 H11.5" fill="none" stroke="#000"/></svg>
<svg style="left:676px;top:72px" width="16" height="16"><path d="M1 6 H5 L6 5 H10 V13 H1Z" fill="#ffff80" stroke="#000" stroke-width="0.8"/><path d="M3 9 H15 L11 14 H1Z" fill="#808000" stroke="#000" stroke-width="0.8"/><path d="M9 4 Q12 1 14 4" fill="none" stroke="#000" stroke-width="1.2"/><path d="M12.5 4 h2.5 v-2.5z" fill="#000"/></svg>
<svg style="left:700px;top:73px" width="15" height="15"><rect x="0.5" y="0.5" width="14" height="14" fill="#808000" stroke="#000"/><rect x="3" y="1" width="8" height="6" fill="#e0e0e0"/><rect x="3" y="9" width="9" height="6" fill="#000"/><rect x="9" y="10" width="2" height="3" fill="#fff"/></svg>
<svg style="left:729px;top:72px" width="17" height="16"><path d="M4.5 1.5 H13.5 V5.5 H4.5Z" fill="#fff" stroke="#000"/><path d="M6 3.5h6" stroke="#000"/><rect x="1.5" y="5.5" width="14" height="7" rx="2.5" fill="#fff" stroke="#000" stroke-width="1.4"/><rect x="2.5" y="12.5" width="12" height="2" fill="#fff" stroke="#000"/><path d="M6 10 H11" stroke="#ffff00" stroke-width="1.6"/><path d="M3 8 H14" stroke="#000" stroke-width="0.8"/></svg>
<svg style="left:754px;top:73px" width="16" height="16"><path d="M1.5 1.5 H7.5 L10.5 4.5 V13.5 H1.5 Z" fill="#fff" stroke="#000"/><circle cx="9" cy="10" r="3.2" fill="#a0f0ff" stroke="#000"/><path d="M11 12 L14.5 15" stroke="#000" stroke-width="1.6"/></svg>
<svg style="left:777px;top:72px" width="16" height="16"><path d="M8 1 V15 M1 8 H15" stroke="#a0a0a0" stroke-width="1.8"/><path d="M8 0 L5.5 3 H10.5Z M8 16 L5.5 13 H10.5Z M0 8 L3 5.5 V10.5Z M16 8 L13 5.5 V10.5Z" fill="#a0a0a0"/></svg>
<svg style="left:800px;top:71px" width="16" height="18"><text x="2" y="15" font-family="Liberation Sans" font-weight="700" font-size="17" fill="#ffff00" stroke="#000" stroke-width="1.1" paint-order="stroke">?</text></svg>
<svg style="left:822px;top:71px" width="20" height="18"><path d="M1 1 L1 14 L4 11 L7 16 L9 15 L6.5 10 H10.5Z" fill="#000"/><text x="9" y="12" font-family="Liberation Serif" font-weight="700" font-size="15" fill="#00007b">?</text></svg>
<div class="r" style="left:644px;top:95px;width:466px;height:508px;background:#f0f0f0;border-top:1px solid #a0a0a0;border-left:1px solid #a0a0a0;box-shadow:inset 1px 1px 0 #fff"></div>
<div class="r" style="left:644px;top:602px;width:466px;height:20px;background:#f0f0f0;border-top:1px solid #fff"></div>
<div class="r" style="left:644px;top:601px;width:466px;height:1px;background:#d8d8d8"></div>
<div class="t" style="left:647.00px;top:607.69px;font-size:11px;line-height:11px;letter-spacing:0px;">For Help, press F1</div>
<svg style="left:1097px;top:609px" width="12" height="12"><path d="M11 1 L1 11 M11 5 L5 11 M11 9 L9 11" stroke="#a0a0a0" stroke-width="1.2"/><path d="M11 2 L2 11 M11 6 L6 11 M11 10 L10 11" stroke="#fff" stroke-width="0.8"/></svg>
<div class="t" style="left:657.00px;top:108.69px;font-size:11px;line-height:11px;letter-spacing:-0.2px;"><u>D</u>rive:</div>
<div class="r" style="left:733px;top:104px;width:77px;height:20px;background:#fff;border-top:1px solid #a0a0a0;border-left:1px solid #a0a0a0;border-right:1px solid #fff;border-bottom:1px solid #fff;box-shadow:inset 1px 1px 0 #696969, inset -1px -1px 0 #e3e3e3"></div>
<div class="r" style="left:792px;top:106px;width:16px;height:16px;background:#f0f0f0;border-top:1px solid #e3e3e3;border-left:1px solid #e3e3e3;border-right:1px solid #696969;border-bottom:1px solid #696969;box-shadow:inset -1px -1px 0 #a0a0a0, inset 1px 1px 0 #fff"></div>
<svg style="left:796px;top:112px" width="8" height="5"><path d="M0 0 H7 L3.5 3.5Z" fill="#000"/></svg>
<div class="t" style="left:738.00px;top:108.69px;font-size:11px;line-height:11px;letter-spacing:-0.1px;">[-c-]</div>
<div class="t" style="left:658.00px;top:134.69px;font-size:11px;line-height:11px;letter-spacing:-0.35px;">Transfer Si<u>z</u>e:</div>
<div class="r" style="left:733px;top:130px;width:77px;height:20px;background:#fff;border-top:1px solid #a0a0a0;border-left:1px solid #a0a0a0;border-right:1px solid #fff;border-bottom:1px solid #fff;box-shadow:inset 1px 1px 0 #696969, inset -1px -1px 0 #e3e3e3"></div>
<div class="r" style="left:792px;top:132px;width:16px;height:16px;background:#f0f0f0;border-top:1px solid #e3e3e3;border-left:1px solid #e3e3e3;border-right:1px solid #696969;border-bottom:1px solid #696969;box-shadow:inset -1px -1px 0 #a0a0a0, inset 1px 1px 0 #fff"></div>
<svg style="left:796px;top:138px" width="8" height="5"><path d="M0 0 H7 L3.5 3.5Z" fill="#000"/></svg>
<div class="t" style="left:738.00px;top:134.69px;font-size:11px;line-height:11px;text-align:center;width:56px;">0.5</div>
<div class="t" style="left:814.00px;top:134.69px;font-size:11px;line-height:11px;letter-spacing:-0.1px;"><u>t</u>o</div>
<div class="r" style="left:829px;top:130px;width:77px;height:20px;background:#fff;border-top:1px solid #a0a0a0;border-left:1px solid #a0a0a0;border-right:1px solid #fff;border-bottom:1px solid #fff;box-shadow:inset 1px 1px 0 #696969, inset -1px -1px 0 #e3e3e3"></div>
<div class="r" style="left:888px;top:132px;width:16px;height:16px;background:#f0f0f0;border-top:1px solid #e3e3e3;border-left:1px solid #e3e3e3;border-right:1px solid #696969;border-bottom:1px solid #696969;box-shadow:inset -1px -1px 0 #a0a0a0, inset 1px 1px 0 #fff"></div>
<svg style="left:892px;top:138px" width="8" height="5"><path d="M0 0 H7 L3.5 3.5Z" fill="#000"/></svg>
<div class="t" style="left:833.00px;top:134.69px;font-size:11px;line-height:11px;letter-spacing:-0.1px;">8192.0</div>
<div class="t" style="left:914.00px;top:134.69px;font-size:11px;line-height:11px;letter-spacing:-0.1px;">KB</div>
<div class="t" style="left:658.00px;top:160.69px;font-size:11px;line-height:11px;letter-spacing:-0.35px;">Total <u>L</u>ength:</div>
<div class="r" style="left:733px;top:156px;width:77px;height:20px;background:#fff;border-top:1px solid #a0a0a0;border-left:1px solid #a0a0a0;border-right:1px solid #fff;border-bottom:1px solid #fff;box-shadow:inset 1px 1px 0 #696969, inset -1px -1px 0 #e3e3e3"></div>
<div class="r" style="left:792px;top:158px;width:16px;height:16px;background:#f0f0f0;border-top:1px solid #e3e3e3;border-left:1px solid #e3e3e3;border-right:1px solid #696969;border-bottom:1px solid #696969;box-shadow:inset -1px -1px 0 #a0a0a0, inset 1px 1px 0 #fff"></div>
<svg style="left:796px;top:164px" width="8" height="5"><path d="M0 0 H7 L3.5 3.5Z" fill="#000"/></svg>
<div class="t" style="left:738.00px;top:160.69px;font-size:11px;line-height:11px;letter-spacing:-0.1px;">256 MB</div>
<div class="r" style="left:828px;top:105px;width:13px;height:13px;background:#fff;border-top:1px solid #a0a0a0;border-left:1px solid #a0a0a0;border-right:1px solid #fff;border-bottom:1px solid #fff;box-shadow:inset 1px 1px 0 #696969, inset -1px -1px 0 #e3e3e3"></div>
<div class="t" style="left:848.00px;top:106.69px;font-size:11px;line-height:11px;letter-spacing:-0.15px;">Force Write <u>A</u>ccess</div>
<div class="r" style="left:974px;top:105px;width:13px;height:13px;background:#fff;border-top:1px solid #a0a0a0;border-left:1px solid #a0a0a0;border-right:1px solid #fff;border-bottom:1px solid #fff;box-shadow:inset 1px 1px 0 #696969, inset -1px -1px 0 #e3e3e3"></div>
<svg style="left:976px;top:107px" width="9" height="9"><path d="M1 4 L3.5 6.5 L8 1.5" fill="none" stroke="#000" stroke-width="1.8"/></svg>
<div class="t" style="left:993.00px;top:106.69px;font-size:11px;line-height:11px;letter-spacing:-0.2px;">Di<u>r</u>ect I/O</div>
<div class="r" style="left:971px;top:122px;width:126px;height:57px;border:1px solid #a0a0a0;box-shadow:inset 1px 1px 0 #fff, 1px 1px 0 #fff"></div>
<svg style="left:977px;top:127px" width="12" height="12"><path d="M10 2 A5.5 5.5 0 1 0 2 10" fill="none" stroke="#a0a0a0"/><path d="M2 10 A5.5 5.5 0 0 0 10 2" fill="none" stroke="#fff"/><circle cx="6" cy="6" r="4.3" fill="#fff"/><path d="M9 3 A4.3 4.3 0 1 0 3 9" fill="none" stroke="#696969" stroke-width="0.9"/></svg>
<div class="t" style="left:993.00px;top:128.69px;font-size:11px;line-height:11px;letter-spacing:-0.2px;">I/O <u>C</u>omparison</div>
<svg style="left:977px;top:144px" width="12" height="12"><path d="M10 2 A5.5 5.5 0 1 0 2 10" fill="none" stroke="#a0a0a0"/><path d="M2 10 A5.5 5.5 0 0 0 10 2" fill="none" stroke="#fff"/><circle cx="6" cy="6" r="4.3" fill="#fff"/><path d="M9 3 A4.3 4.3 0 1 0 3 9" fill="none" stroke="#696969" stroke-width="0.9"/><circle cx="6" cy="6" r="1.8" fill="#000"/></svg>
<div class="t" style="left:993.00px;top:145.69px;font-size:11px;line-height:11px;letter-spacing:-0.2px;"><u>O</u>verlapped I/O</div>
<svg style="left:977px;top:161px" width="12" height="12"><path d="M10 2 A5.5 5.5 0 1 0 2 10" fill="none" stroke="#a0a0a0"/><path d="M2 10 A5.5 5.5 0 0 0 10 2" fill="none" stroke="#fff"/><circle cx="6" cy="6" r="4.3" fill="#fff"/><path d="M9 3 A4.3 4.3 0 1 0 3 9" fill="none" stroke="#696969" stroke-width="0.9"/></svg>
<div class="t" style="left:993.00px;top:162.69px;font-size:11px;line-height:11px;letter-spacing:-0.2px;"><u>N</u>either</div>
<div class="t" style="left:975.00px;top:186.69px;font-size:11px;line-height:11px;letter-spacing:-0.3px;"><u>Q</u>ueue Depth:</div>
<div class="r" style="left:1051px;top:182px;width:46px;height:20px;background:#fff;border-top:1px solid #a0a0a0;border-left:1px solid #a0a0a0;border-right:1px solid #fff;border-bottom:1px solid #fff;box-shadow:inset 1px 1px 0 #696969, inset -1px -1px 0 #e3e3e3"></div>
<div class="r" style="left:1079px;top:184px;width:16px;height:16px;background:#f0f0f0;border-top:1px solid #e3e3e3;border-left:1px solid #e3e3e3;border-right:1px solid #696969;border-bottom:1px solid #696969;box-shadow:inset -1px -1px 0 #a0a0a0, inset 1px 1px 0 #fff"></div>
<svg style="left:1083px;top:190px" width="8" height="5"><path d="M0 0 H7 L3.5 3.5Z" fill="#000"/></svg>
<div class="t" style="left:1056.00px;top:186.69px;font-size:11px;line-height:11px;">4</div>
<div class="t" style="left:657.00px;top:209.69px;font-size:11px;line-height:11px;letter-spacing:-0.35px;">Controlled <u>b</u>y:</div>
<div class="r" style="left:657px;top:222px;width:212px;height:20px;background:#fff;border-top:1px solid #a0a0a0;border-left:1px solid #a0a0a0;border-right:1px solid #fff;border-bottom:1px solid #fff;box-shadow:inset 1px 1px 0 #696969, inset -1px -1px 0 #e3e3e3"></div>
<div class="r" style="left:851px;top:224px;width:16px;height:16px;background:#f0f0f0;border-top:1px solid #e3e3e3;border-left:1px solid #e3e3e3;border-right:1px solid #696969;border-bottom:1px solid #696969;box-shadow:inset -1px -1px 0 #a0a0a0, inset 1px 1px 0 #fff"></div>
<svg style="left:855px;top:230px" width="8" height="5"><path d="M0 0 H7 L3.5 3.5Z" fill="#000"/></svg>
<div class="r" style="left:1029px;top:222px;width:69px;height:20px;background:#f0f0f0;border-top:1px solid #fff;border-left:1px solid #fff;border-right:1px solid #000;border-bottom:1px solid #000;box-shadow:inset -1px -1px 0 #a0a0a0, inset 1px 1px 0 #e3e3e3"></div>
<div class="t" style="left:1029.00px;top:226.69px;font-size:11px;line-height:11px;letter-spacing:-0.1px;text-align:center;width:69px;"><u>S</u>tart</div>
<div class="r" style="left:657px;top:248px;width:440px;height:45px;background:#fff;border-top:1px solid #a0a0a0;border-left:1px solid #a0a0a0;border-right:1px solid #fff;border-bottom:1px solid #fff;box-shadow:inset 1px 1px 0 #696969, inset -1px -1px 0 #e3e3e3"></div>
<div class="t" style="left:660.00px;top:252.69px;font-size:11px;line-height:11px;letter-spacing:-0.25px;">&lt;&lt; Description &gt;&gt;</div>
<div class="r" style="left:1079px;top:250px;width:16px;height:41px;background:#f0f0f0"></div>
<svg style="left:1083px;top:254px" width="9" height="35"><path d="M1 5 L4.5 1.5 L8 5Z M1 29 L4.5 32.5 L8 29Z" fill="#a0a0a0"/></svg>
<div class="r" style="left:657px;top:303px;width:440px;height:287px;border-top:1px solid #a0a0a0;border-left:1px solid #a0a0a0;border-right:1px solid #fff;border-bottom:1px solid #fff;box-shadow:inset 1px 1px 0 #fff, inset -1px -1px 0 #a0a0a0"></div>
<div class="r" style="left:845px;top:298px;width:64px;height:10px;background:#f0f0f0"></div>
<div class="t" style="left:848.00px;top:298.69px;font-size:11px;line-height:11px;letter-spacing:-0.2px;">Test Results</div>
<div class="t" style="left:794.00px;top:314.69px;font-size:11px;line-height:11px;letter-spacing:-0.2px;">Write</div>
<div class="r" style="left:826px;top:317px;width:25px;height:5px;background:#ff0000"></div>
<div class="t" style="left:877.00px;top:314.69px;font-size:11px;line-height:11px;letter-spacing:-0.2px;">Read</div>
<div class="r" style="left:909px;top:317px;width:25px;height:5px;background:#008000"></div>
<div class="r" style="left:696px;top:329px;width:301px;height:224px;background:#fff;border-top:1px solid #808080;border-left:1px solid #808080;border-right:1px solid #808080;border-bottom:1px solid #808080"></div>
<div class="t" style="left:660.00px;top:334.69px;font-size:11px;line-height:11px;letter-spacing:-0.1px;text-align:right;width:33px;">0.5</div>
<div class="t" style="left:990.00px;top:334.69px;font-size:11px;line-height:11px;letter-spacing:-0.2px;text-align:right;width:50px;">16981</div>
<div class="t" style="left:1038.00px;top:334.69px;font-size:11px;line-height:11px;letter-spacing:-0.2px;text-align:right;width:50px;">13118</div>
<div class="t" style="left:660.00px;top:348.69px;font-size:11px;line-height:11px;letter-spacing:-0.1px;text-align:right;width:33px;">1.0</div>
<div class="t" style="left:990.00px;top:348.69px;font-size:11px;line-height:11px;letter-spacing:-0.2px;text-align:right;width:50px;">40091</div>
<div class="t" style="left:1038.00px;top:348.69px;font-size:11px;line-height:11px;letter-spacing:-0.2px;text-align:right;width:50px;">39070</div>
<div class="t" style="left:660.00px;top:363.69px;font-size:11px;line-height:11px;letter-spacing:-0.1px;text-align:right;width:33px;">2.0</div>
<div class="t" style="left:990.00px;top:363.69px;font-size:11px;line-height:11px;letter-spacing:-0.2px;text-align:right;width:50px;">91684</div>
<div class="t" style="left:1038.00px;top:363.69px;font-size:11px;line-height:11px;letter-spacing:-0.2px;text-align:right;width:50px;">84306</div>
<div class="t" style="left:660.00px;top:377.69px;font-size:11px;line-height:11px;letter-spacing:-0.1px;text-align:right;width:33px;">4.0</div>
<div class="t" style="left:990.00px;top:377.69px;font-size:11px;line-height:11px;letter-spacing:-0.2px;text-align:right;width:50px;">152649</div>
<div class="t" style="left:1038.00px;top:377.69px;font-size:11px;line-height:11px;letter-spacing:-0.2px;text-align:right;width:50px;">140361</div>
<div class="t" style="left:660.00px;top:392.69px;font-size:11px;line-height:11px;letter-spacing:-0.1px;text-align:right;width:33px;">8.0</div>
<div class="t" style="left:990.00px;top:392.69px;font-size:11px;line-height:11px;letter-spacing:-0.2px;text-align:right;width:50px;">229998</div>
<div class="t" style="left:1038.00px;top:392.69px;font-size:11px;line-height:11px;letter-spacing:-0.2px;text-align:right;width:50px;">221806</div>
<div class="t" style="left:660.00px;top:406.69px;font-size:11px;line-height:11px;letter-spacing:-0.1px;text-align:right;width:33px;">16.0</div>
<div class="t" style="left:990.00px;top:406.69px;font-size:11px;line-height:11px;letter-spacing:-0.2px;text-align:right;width:50px;">268503</div>
<div class="t" style="left:1038.00px;top:406.69px;font-size:11px;line-height:11px;letter-spacing:-0.2px;text-align:right;width:50px;">224220</div>
<div class="t" style="left:660.00px;top:421.69px;font-size:11px;line-height:11px;letter-spacing:-0.1px;text-align:right;width:33px;">32.0</div>
<div class="t" style="left:990.00px;top:421.69px;font-size:11px;line-height:11px;letter-spacing:-0.2px;text-align:right;width:50px;">274568</div>
<div class="t" style="left:1038.00px;top:421.69px;font-size:11px;line-height:11px;letter-spacing:-0.2px;text-align:right;width:50px;">267766</div>
<div class="t" style="left:660.00px;top:436.69px;font-size:11px;line-height:11px;letter-spacing:-0.1px;text-align:right;width:33px;">64.0</div>
<div class="t" style="left:990.00px;top:436.69px;font-size:11px;line-height:11px;letter-spacing:-0.2px;text-align:right;width:50px;">270612</div>
<div class="t" style="left:1038.00px;top:436.69px;font-size:11px;line-height:11px;letter-spacing:-0.2px;text-align:right;width:50px;">266197</div>
<div class="t" style="left:660.00px;top:450.69px;font-size:11px;line-height:11px;letter-spacing:-0.1px;text-align:right;width:33px;">128.0</div>
<div class="t" style="left:990.00px;top:450.69px;font-size:11px;line-height:11px;letter-spacing:-0.2px;text-align:right;width:50px;">269533</div>
<div class="t" style="left:1038.00px;top:450.69px;font-size:11px;line-height:11px;letter-spacing:-0.2px;text-align:right;width:50px;">268332</div>
<div class="t" style="left:660.00px;top:465.69px;font-size:11px;line-height:11px;letter-spacing:-0.1px;text-align:right;width:33px;">256.0</div>
<div class="t" style="left:990.00px;top:465.69px;font-size:11px;line-height:11px;letter-spacing:-0.2px;text-align:right;width:50px;">272629</div>
<div class="t" style="left:1038.00px;top:465.69px;font-size:11px;line-height:11px;letter-spacing:-0.2px;text-align:right;width:50px;">276009</div>
<div class="t" style="left:660.00px;top:479.69px;font-size:11px;line-height:11px;letter-spacing:-0.1px;text-align:right;width:33px;">512.0</div>
<div class="t" style="left:990.00px;top:479.69px;font-size:11px;line-height:11px;letter-spacing:-0.2px;text-align:right;width:50px;">268973</div>
<div class="t" style="left:1038.00px;top:479.69px;font-size:11px;line-height:11px;letter-spacing:-0.2px;text-align:right;width:50px;">257492</div>
<div class="t" style="left:660.00px;top:494.69px;font-size:11px;line-height:11px;letter-spacing:-0.1px;text-align:right;width:33px;">1024.0</div>
<div class="t" style="left:990.00px;top:494.69px;font-size:11px;line-height:11px;letter-spacing:-0.2px;text-align:right;width:50px;">273355</div>
<div class="t" style="left:1038.00px;top:494.69px;font-size:11px;line-height:11px;letter-spacing:-0.2px;text-align:right;width:50px;">255045</div>
<div class="t" style="left:660.00px;top:509.69px;font-size:11px;line-height:11px;letter-spacing:-0.1px;text-align:right;width:33px;">2048.0</div>
<div class="t" style="left:990.00px;top:509.69px;font-size:11px;line-height:11px;letter-spacing:-0.2px;text-align:right;width:50px;">273355</div>
<div class="t" style="left:1038.00px;top:509.69px;font-size:11px;line-height:11px;letter-spacing:-0.2px;text-align:right;width:50px;">261888</div>
<div class="t" style="left:660.00px;top:523.69px;font-size:11px;line-height:11px;letter-spacing:-0.1px;text-align:right;width:33px;">4096.0</div>
<div class="t" style="left:990.00px;top:523.69px;font-size:11px;line-height:11px;letter-spacing:-0.2px;text-align:right;width:50px;">268435</div>
<div class="t" style="left:1038.00px;top:523.69px;font-size:11px;line-height:11px;letter-spacing:-0.2px;text-align:right;width:50px;">275036</div>
<div class="t" style="left:660.00px;top:538.69px;font-size:11px;line-height:11px;letter-spacing:-0.1px;text-align:right;width:33px;">8192.0</div>
<div class="t" style="left:990.00px;top:538.69px;font-size:11px;line-height:11px;letter-spacing:-0.2px;text-align:right;width:50px;">270055</div>
<div class="t" style="left:1038.00px;top:538.69px;font-size:11px;line-height:11px;letter-spacing:-0.2px;text-align:right;width:50px;">269513</div>
<svg style="left:696px;top:329px" width="301" height="224"><rect x="30" y="1" width="1" height="222" fill="#0000ff"/><rect x="60" y="1" width="1" height="222" fill="#0000ff"/><rect x="90" y="1" width="1" height="222" fill="#0000ff"/><rect x="120" y="1" width="1" height="222" fill="#0000ff"/><rect x="150" y="1" width="1" height="222" fill="#0000ff"/><rect x="180" y="1" width="1" height="222" fill="#0000ff"/><rect x="210" y="1" width="1" height="222" fill="#0000ff"/><rect x="240" y="1" width="1" height="222" fill="#0000ff"/><rect x="270" y="1" width="1" height="222" fill="#0000ff"/><rect x="0" y="5" width="10" height="5" fill="#ff0000"/><rect x="0" y="10" width="7" height="5" fill="#008000"/><rect x="0" y="19" width="24" height="5" fill="#ff0000"/><rect x="0" y="24" width="23" height="5" fill="#008000"/><rect x="0" y="34" width="55" height="5" fill="#ff0000"/><rect x="0" y="39" width="50" height="5" fill="#008000"/><rect x="0" y="48" width="91" height="5" fill="#ff0000"/><rect x="0" y="53" width="84" height="5" fill="#008000"/><rect x="0" y="63" width="137" height="5" fill="#ff0000"/><rect x="0" y="68" width="133" height="5" fill="#008000"/><rect x="0" y="77" width="161" height="5" fill="#ff0000"/><rect x="0" y="82" width="134" height="5" fill="#008000"/><rect x="0" y="92" width="164" height="5" fill="#ff0000"/><rect x="0" y="97" width="160" height="5" fill="#008000"/><rect x="0" y="107" width="162" height="5" fill="#ff0000"/><rect x="0" y="112" width="159" height="5" fill="#008000"/><rect x="0" y="121" width="161" height="5" fill="#ff0000"/><rect x="0" y="126" width="160" height="5" fill="#008000"/><rect x="0" y="136" width="163" height="5" fill="#ff0000"/><rect x="0" y="141" width="165" height="5" fill="#008000"/><rect x="0" y="150" width="161" height="5" fill="#ff0000"/><rect x="0" y="155" width="154" height="5" fill="#008000"/><rect x="0" y="165" width="164" height="5" fill="#ff0000"/><rect x="0" y="170" width="153" height="5" fill="#008000"/><rect x="0" y="180" width="164" height="5" fill="#ff0000"/><rect x="0" y="185" width="157" height="5" fill="#008000"/><rect x="0" y="194" width="161" height="5" fill="#ff0000"/><rect x="0" y="199" width="165" height="5" fill="#008000"/><rect x="0" y="209" width="162" height="5" fill="#ff0000"/><rect x="0" y="214" width="161" height="5" fill="#008000"/></svg>
<div class="t" style="left:1005.00px;top:314.69px;font-size:11px;line-height:11px;letter-spacing:-0.2px;">Write</div>
<div class="t" style="left:1054.00px;top:314.69px;font-size:11px;line-height:11px;letter-spacing:-0.2px;">Read</div>
<div class="t" style="left:676.00px;top:561.69px;font-size:11px;line-height:11px;letter-spacing:-0.1px;text-align:center;width:40px;">0</div>
<div class="t" style="left:706.00px;top:561.69px;font-size:11px;line-height:11px;letter-spacing:-0.1px;text-align:center;width:40px;">50</div>
<div class="t" style="left:736.00px;top:561.69px;font-size:11px;line-height:11px;letter-spacing:-0.1px;text-align:center;width:40px;">100</div>
<div class="t" style="left:766.00px;top:561.69px;font-size:11px;line-height:11px;letter-spacing:-0.1px;text-align:center;width:40px;">150</div>
<div class="t" style="left:796.00px;top:561.69px;font-size:11px;line-height:11px;letter-spacing:-0.1px;text-align:center;width:40px;">200</div>
<div class="t" style="left:826.00px;top:561.69px;font-size:11px;line-height:11px;letter-spacing:-0.1px;text-align:center;width:40px;">250</div>
<div class="t" style="left:856.00px;top:561.69px;font-size:11px;line-height:11px;letter-spacing:-0.1px;text-align:center;width:40px;">300</div>
<div class="t" style="left:886.00px;top:561.69px;font-size:11px;line-height:11px;letter-spacing:-0.1px;text-align:center;width:40px;">350</div>
<div class="t" style="left:916.00px;top:561.69px;font-size:11px;line-height:11px;letter-spacing:-0.1px;text-align:center;width:40px;">400</div>
<div class="t" style="left:946.00px;top:561.69px;font-size:11px;line-height:11px;letter-spacing:-0.1px;text-align:center;width:40px;">450</div>
<div class="t" style="left:976.00px;top:561.69px;font-size:11px;line-height:11px;letter-spacing:-0.1px;text-align:center;width:40px;">500</div>
<div class="t" style="left:781.00px;top:574.69px;font-size:11px;line-height:11px;letter-spacing:-0.15px;">Transfer Rate - MB / Sec</div>
</body></html>
